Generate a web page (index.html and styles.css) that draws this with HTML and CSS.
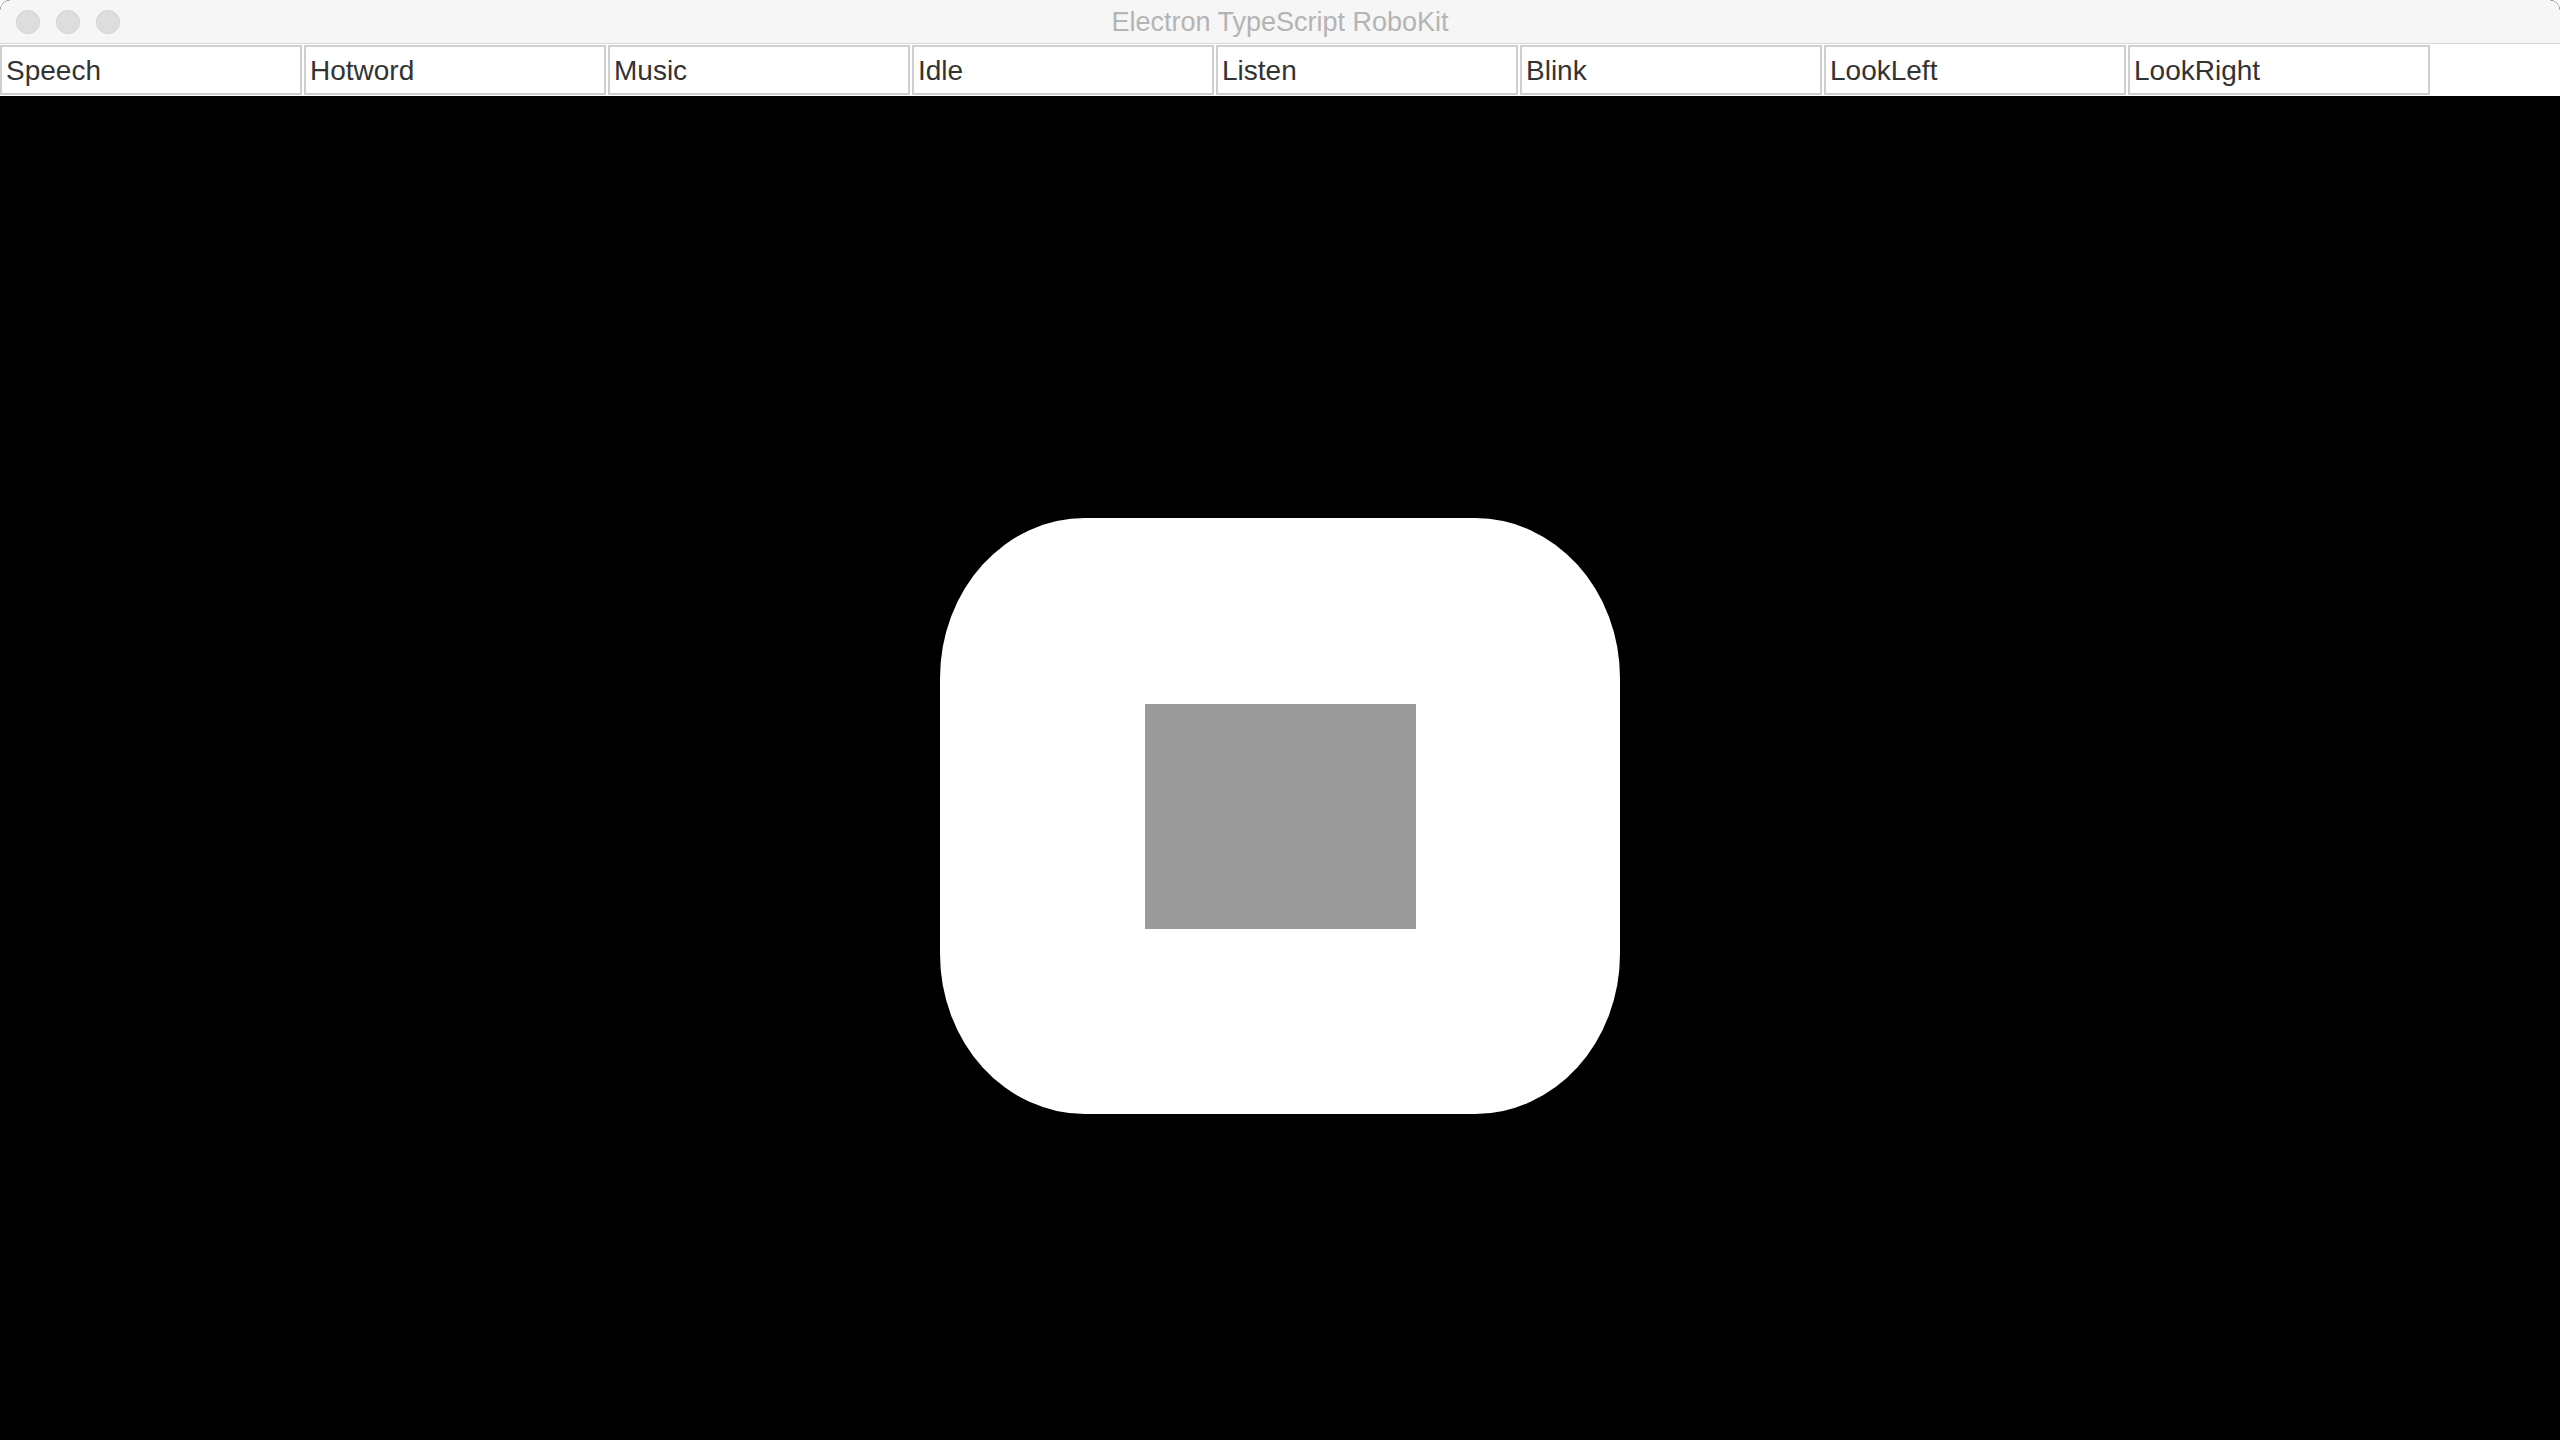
FILE: index.html
```html
<!DOCTYPE html>
<html lang="en">
<head>
<meta charset="utf-8">
<title>Electron TypeScript RoboKit</title>
<link rel="stylesheet" href="styles.css">
</head>
<body>
<div class="window">
  <header class="titlebar">
    <div class="lights">
      <span class="light"></span>
      <span class="light"></span>
      <span class="light"></span>
    </div>
    <div class="title">Electron TypeScript RoboKit</div>
  </header>
  <nav class="toolbar">
    <button class="btn">Speech</button>
    <button class="btn">Hotword</button>
    <button class="btn">Music</button>
    <button class="btn">Idle</button>
    <button class="btn">Listen</button>
    <button class="btn">Blink</button>
    <button class="btn">LookLeft</button>
    <button class="btn">LookRight</button>
  </nav>
  <main class="stage">
    <div class="face">
      <div class="eye"></div>
    </div>
  </main>
</div>
</body>
</html>
```
FILE: styles.css
```css
html, body {
  margin: 0;
  padding: 0;
  background: #ffffff;
  overflow: hidden;
  height: 1440px;
}

.window {
  width: 2560px;
  height: 1440px;
  overflow: hidden;
  display: flex;
  flex-direction: column;
  background: #000;
  border-radius: 10px 10px 0 0;
}

.titlebar {
  position: relative;
  flex: 0 0 auto;
  height: 43px;
  background: #f6f6f6;
  border-bottom: 1px solid #d6d6d6;
  display: flex;
  align-items: center;
  justify-content: center;
  border-radius: 10px 10px 0 0;
}

.lights {
  position: absolute;
  left: 16px;
  top: 10px;
  display: flex;
  gap: 16px;
}

.light {
  width: 22px;
  height: 22px;
  border-radius: 50%;
  background: #dddddd;
  border: 1px solid #d2d2d2;
}

.title {
  font-family: "Liberation Sans", Arial, sans-serif;
  font-size: 27px;
  color: #b4b4b4;
  line-height: 1;
  margin-top: 2px;
}

.toolbar {
  flex: 0 0 auto;
  height: 52px;
  background: #ffffff;
  display: flex;
  align-items: flex-start;
  gap: 2px;
  padding-top: 1px;
  box-sizing: border-box;
}

.btn {
  width: 302px;
  height: 50px;
  box-sizing: border-box;
  margin: 0;
  border: 2px solid #cfcfcf;
  background: #ffffff;
  font-family: "Liberation Sans", Arial, sans-serif;
  font-size: 28px;
  color: #333333;
  text-align: left;
  padding: 2px 0 0 4px;
  line-height: 1;
}

.stage {
  flex: 0 0 auto;
  height: 1440px;
  display: flex;
  align-items: center;
  justify-content: center;
  background: #000000;
}

.face {
  width: 680px;
  height: 596px;
  background: #ffffff;
  border-radius: 145px / 160px;
  display: flex;
  align-items: center;
  justify-content: center;
}

.eye {
  width: 271px;
  height: 225px;
  background: #9b9b9b;
}
```
